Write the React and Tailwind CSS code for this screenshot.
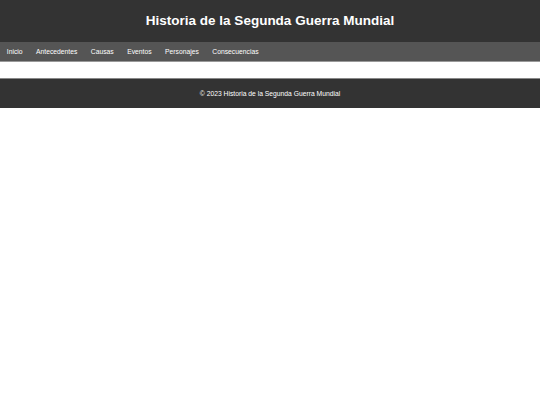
export default function App() {
  const links = ["Inicio", "Antecedentes", "Causas", "Eventos", "Personajes", "Consecuencias"];

  return (
    <div className="min-h-[405px] bg-white font-['Liberation_Sans',Arial,sans-serif]">
      <header className="flex h-[42px] items-center justify-center bg-[#333] text-white">
        <h1 className="text-[13.5px] font-bold leading-none">Historia de la Segunda Guerra Mundial</h1>
      </header>

      <nav className="flex h-[20px] items-center border-b border-[#999] bg-[#555] pt-[2px]">
        {links.map((l) => (
          <a key={l} href="#" className="px-[6.75px] text-[6.75px] leading-none text-white">
            {l}
          </a>
        ))}
      </nav>

      <main className="h-[16px]" />

      <footer className="flex h-[30px] items-center justify-center border-t border-[#888] bg-[#333] pt-px text-[6.75px] text-white">
        © 2023 Historia de la Segunda Guerra Mundial
      </footer>
    </div>
  );
}
